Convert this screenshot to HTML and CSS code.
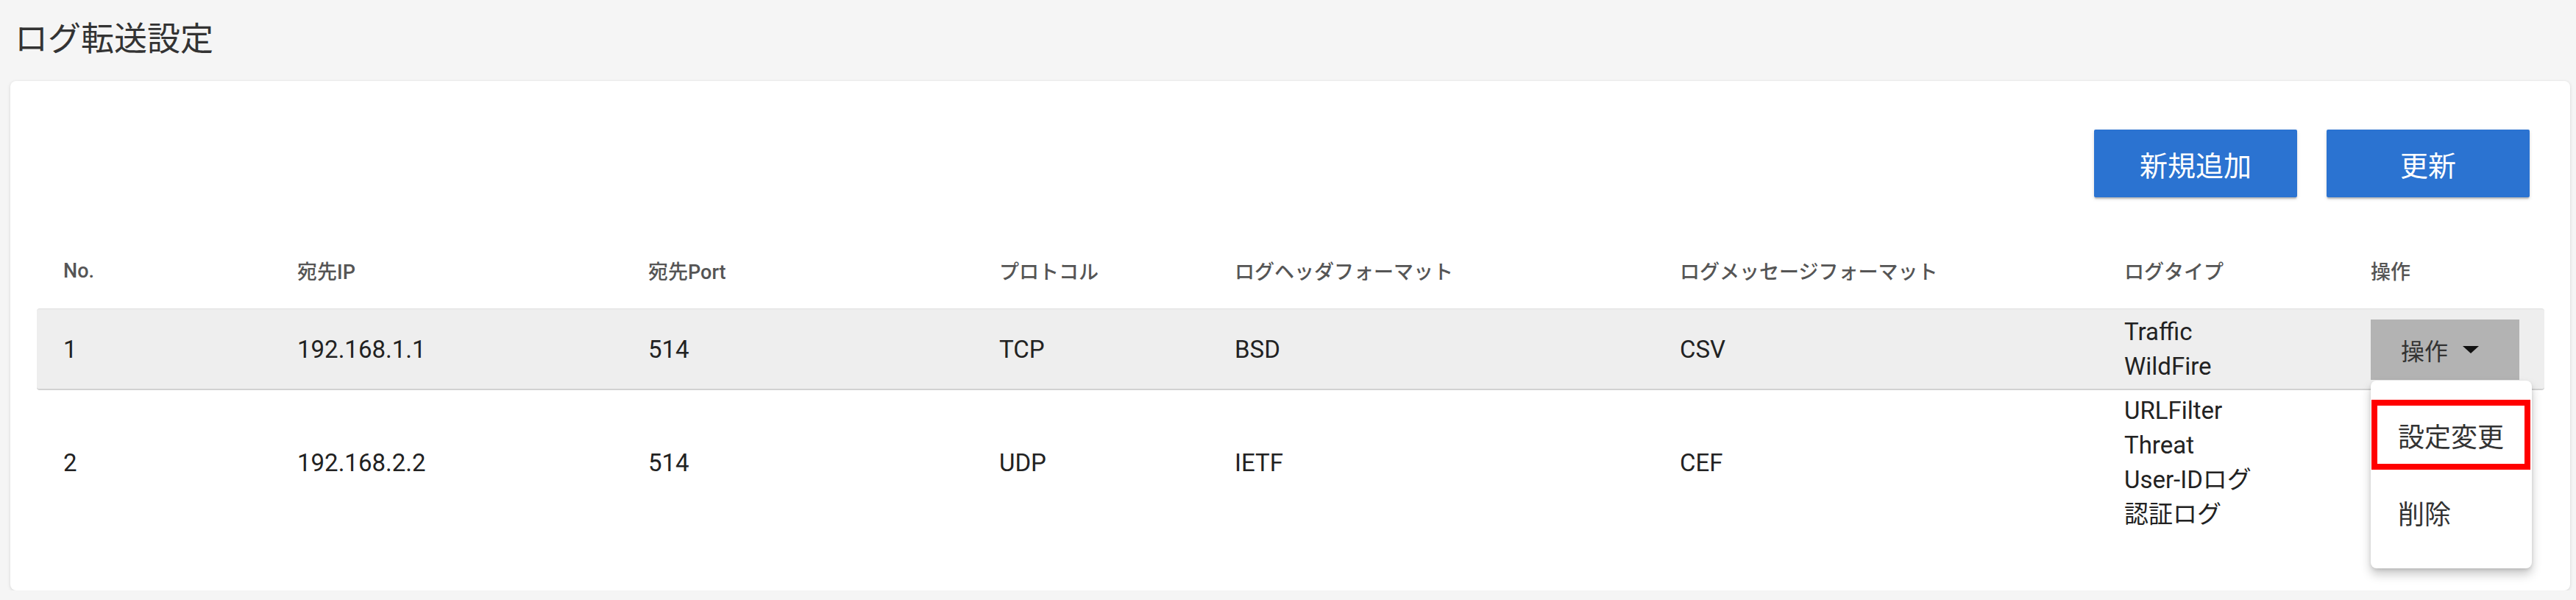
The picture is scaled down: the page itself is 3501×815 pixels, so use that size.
FILE: index.html
```html
<!DOCTYPE html>
<html lang="ja">
<head>
    <meta charset="UTF-8">
    <meta name="viewport" content="width=device-width, initial-scale=1.0">
    <title>ログ転送設定</title>
    <link rel="stylesheet" href="styles.css">
</head>
<body>

    <h1 class="page-title">ログ転送設定</h1>

    <div class="card">
        <div class="toolbar">
            <button class="btn-primary">新規追加</button>
            <button class="btn-primary">更新</button>
        </div>

        <div class="log-table">
            <div class="row head">
                <div class="cell">No.</div>
                <div class="cell">宛先IP</div>
                <div class="cell">宛先Port</div>
                <div class="cell">プロトコル</div>
                <div class="cell">ログヘッダフォーマット</div>
                <div class="cell">ログメッセージフォーマット</div>
                <div class="cell">ログタイプ</div>
                <div class="cell">操作</div>
            </div>

            <div class="row selected">
                <div class="cell">1</div>
                <div class="cell">192.168.1.1</div>
                <div class="cell">514</div>
                <div class="cell">TCP</div>
                <div class="cell">BSD</div>
                <div class="cell">CSV</div>
                <div class="cell types">
                    <span>Traffic</span>
                    <span>WildFire</span>
                </div>
                <div class="cell op">
                    <div class="dropdown">
                        <button class="btn-op">操作<span class="caret"></span></button>
                        <ul class="menu">
                            <li class="menu-item marked">設定変更</li>
                            <li class="menu-item">削除</li>
                        </ul>
                    </div>
                </div>
            </div>

            <div class="row">
                <div class="cell">2</div>
                <div class="cell">192.168.2.2</div>
                <div class="cell">514</div>
                <div class="cell">UDP</div>
                <div class="cell">IETF</div>
                <div class="cell">CEF</div>
                <div class="cell types">
                    <span>URLFilter</span>
                    <span>Threat</span>
                    <span>User-IDログ</span>
                    <span>認証ログ</span>
                </div>
                <!-- row 2's button sits under the open menu -->
                <div class="cell op"></div>
            </div>
        </div>
    </div>

</body>
</html>
```

FILE: styles.css
```css
body {
    font-family: Roboto, "Noto Sans CJK JP", sans-serif;
    background-color: #f5f5f5;
    color: #222;
    margin: 0;
    padding: 0;
}

.page-title {
    font-family: "Noto Sans CJK JP", sans-serif;
    font-size: 45px;
    font-weight: 400;
    line-height: 60px;
    color: #333;
    margin: 0 0 30px 0;
    padding: 20px 0 0 20px;
}

.card {
    margin: 0 8px 0 14px;
    height: 692px;
    box-sizing: border-box;
    background-color: #fff;
    border-radius: 8px;
    box-shadow: 0 1px 4px rgba(0,0,0,0.14);
    padding: 66px 35px 0 36px;
}

.toolbar {
    display: flex;
    justify-content: flex-end;
    gap: 40px;
    padding-right: 20px;
}

.btn-primary {
    width: 276px;
    height: 92px;
    border: none;
    border-radius: 2px;
    background-color: #2b73d1;
    color: #fff;
    font-family: "Noto Sans CJK JP", sans-serif;
    font-size: 38px;
    box-shadow: 0 3px 2px -1px rgba(0,0,0,0.2), 0 2px 5px rgba(0,0,0,0.14);
    cursor: pointer;
}

.log-table {
    margin-top: 48px;
}

.row {
    display: grid;
    grid-template-columns: 318px 477px 477px 320px 605px 604px 335px 272px;
}

.row.head {
    height: 103px;
    font-weight: 500;
    color: #555;
}

.row.selected {
    background-color: #eeeeee;
    border-top: 1px solid #dedede;
    border-bottom: 2px solid #d2d2d2;
    border-radius: 4px;
}

.cell {
    display: flex;
    align-items: center;
    padding: 4px 0 4px 36px;
    font-size: 33px;
}

.row.head .cell {
    font-size: 27px;
}

.cell.types {
    flex-direction: column;
    align-items: flex-start;
    justify-content: center;
    line-height: 47px;
}

.cell.op {
    padding: 14px 0 12px 36px;
}

.dropdown {
    position: relative;
}

.btn-op {
    display: flex;
    align-items: center;
    width: 202px;
    height: 82px;
    padding: 0 0 0 41px;
    border: none;
    background-color: #b3b3b3;
    color: #333;
    font-family: "Noto Sans CJK JP", sans-serif;
    font-size: 32px;
}

.caret {
    margin-left: 20px;
    border-left: 11px solid transparent;
    border-right: 11px solid transparent;
    border-top: 10px solid #111;
}

.menu {
    position: absolute;
    top: calc(100% + 1px);
    left: 0;
    width: 219px;
    height: 255px;
    box-sizing: border-box;
    margin: 0;
    padding: 26px 0 0 0;
    list-style: none;
    background-color: #fff;
    border-radius: 8px;
    box-shadow: 0 8px 14px rgba(0,0,0,0.22), 0 2px 4px rgba(0,0,0,0.1);
    z-index: 10;
}

.menu-item {
    display: flex;
    align-items: center;
    height: 95px;
    box-sizing: border-box;
    margin: 0 2px 0 1px;
    padding-left: 36px;
    font-family: "Noto Sans CJK JP", sans-serif;
    font-size: 36px;
    color: #333;
}

.menu-item + .menu-item {
    margin-top: 10px;
}

.menu-item.marked {
    border: 8px solid #ff0000;
    padding-left: 28px;
}
```
